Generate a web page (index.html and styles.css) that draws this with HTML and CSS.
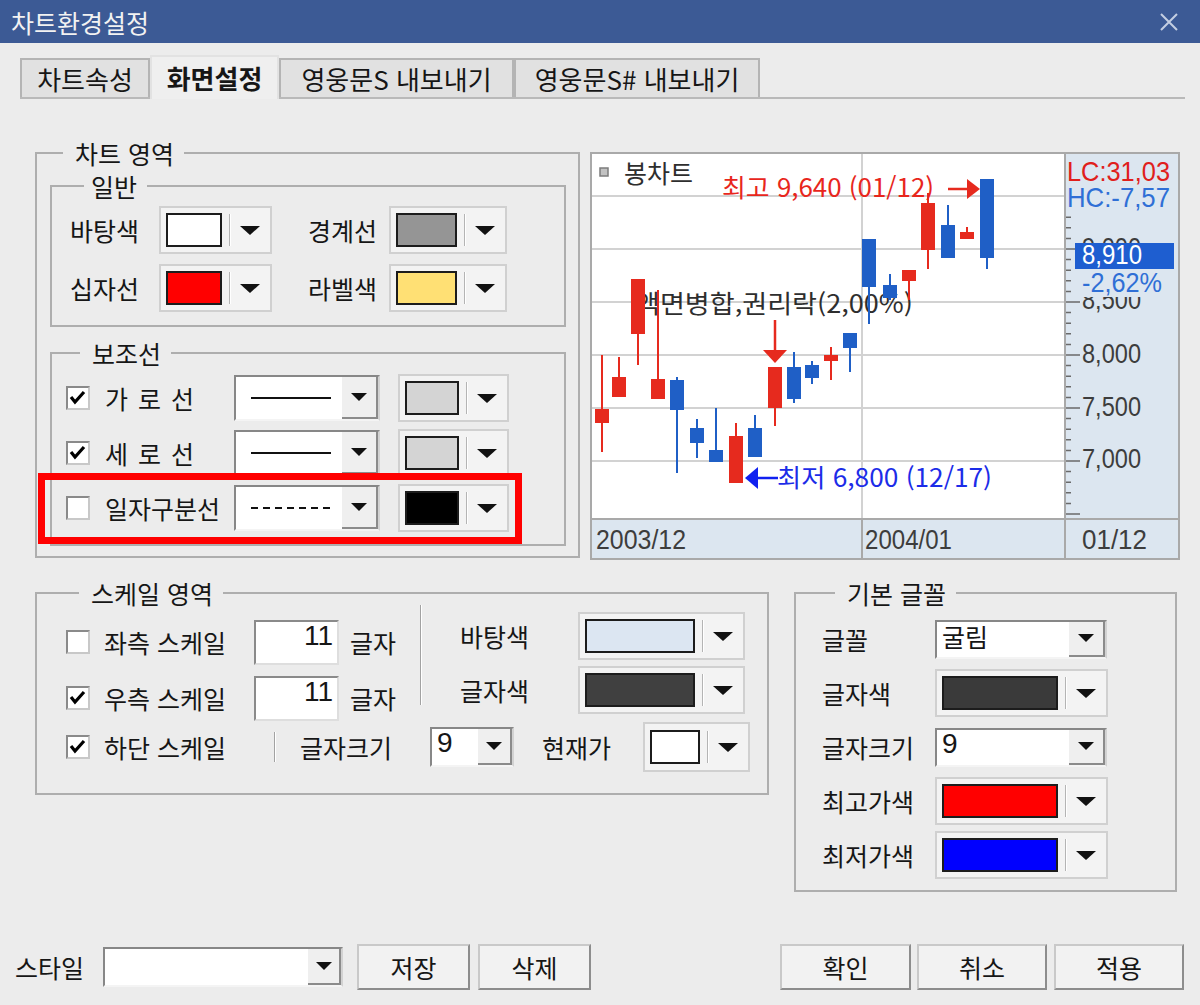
FILE: index.html
```html
<!DOCTYPE html>
<html lang="ko">

<head>
    <meta charset="UTF-8">
    <meta name="viewport" content="width=device-width, initial-scale=1.0">
    <title>차트환경설정</title>
    <link rel="stylesheet" href="styles.css">
</head>

<body>
    <div class="dialog">
        <div class="titlebar">
            <span class="title">차트환경설정</span>
            <svg class="close" width="20" height="20" viewBox="0 0 20 20">
                <path d="M2 2L18 18M18 2L2 18" stroke="#c4cee2" stroke-width="2" />
            </svg>
        </div>

        <div class="tabs">
            <div class="tab tab-1">차트속성</div>
            <div class="tab tab-2 active">화면설정</div>
            <div class="tab tab-3">영웅문S 내보내기</div>
            <div class="tab tab-4">영웅문S# 내보내기</div>
        </div>

        <div class="upper">
            <fieldset class="group chart-area">
                <legend>차트 영역</legend>

                <fieldset class="group general">
                    <legend>일반</legend>
                    <div class="general-grid">
                        <span>바탕색</span>
                        <div class="ccombo"><span class="swatch sw-white"></span><span class="sep"></span><span class="tri"></span></div>
                        <span class="lbl2">경계선</span>
                        <div class="ccombo"><span class="swatch sw-gray"></span><span class="sep"></span><span class="tri"></span></div>
                        <span>십자선</span>
                        <div class="ccombo"><span class="swatch sw-red"></span><span class="sep"></span><span class="tri"></span></div>
                        <span class="lbl2">라벨색</span>
                        <div class="ccombo"><span class="swatch sw-yellow"></span><span class="sep"></span><span class="tri"></span></div>
                    </div>
                </fieldset>

                <fieldset class="group aux">
                    <legend>보조선</legend>
                    <div class="aux-row">
                        <span class="chk"><svg width="20" height="20" viewBox="0 0 20 20"><polyline points="3,9 7,14 16,4" fill="none" stroke="#000" stroke-width="3.2" /></svg></span>
                        <span class="aux-lbl">가 로 선</span>
                        <div class="lcombo"><span class="sample"><span class="stroke"></span></span><span class="drop"><span class="tri"></span></span></div>
                        <div class="ccombo aux-color"><span class="swatch sw-light"></span><span class="sep"></span><span class="tri"></span></div>
                    </div>
                    <div class="aux-row">
                        <span class="chk"><svg width="20" height="20" viewBox="0 0 20 20"><polyline points="3,9 7,14 16,4" fill="none" stroke="#000" stroke-width="3.2" /></svg></span>
                        <span class="aux-lbl">세 로 선</span>
                        <div class="lcombo"><span class="sample"><span class="stroke"></span></span><span class="drop"><span class="tri"></span></span></div>
                        <div class="ccombo aux-color"><span class="swatch sw-light"></span><span class="sep"></span><span class="tri"></span></div>
                    </div>
                    <div class="aux-row">
                        <span class="chk"></span>
                        <span class="aux-lbl">일자구분선</span>
                        <div class="lcombo"><span class="sample"><span class="stroke dashed"></span></span><span class="drop"><span class="tri"></span></span></div>
                        <div class="ccombo aux-color"><span class="swatch sw-black"></span><span class="sep"></span><span class="tri"></span></div>
                        <!-- 강조 표시 -->
                        <div class="highlight"></div>
                    </div>
                </fieldset>
            </fieldset>

            <svg class="preview" width="590" height="408" viewBox="0 0 590 408">
                <rect width="590" height="408" fill="#a9a9a9" />
                <rect x="2" y="2" width="472" height="364" fill="#ffffff" />
                <rect x="476" y="2" width="112" height="364" fill="#dce6f0" />
                <rect x="2" y="368" width="269" height="38" fill="#dce6f0" />
                <rect x="273" y="368" width="201" height="38" fill="#dce6f0" />
                <rect x="476" y="368" width="112" height="38" fill="#dce6f0" />

                <!-- 격자 -->
                <path d="M2 44H474M2 97H474M2 150H474M2 203H474M2 256H474M2 309H474M272 2V366" stroke="#d2d2d2" stroke-width="2" />

                <!-- 눈금 -->
                <path d="M476 65.2h5M476 75.8h5M476 86.4h5M476 107.6h5M476 118.2h5M476 128.8h5M476 139.4h5M476 160.6h5M476 171.2h5M476 181.8h5M476 192.4h5M476 213.6h5M476 224.2h5M476 234.8h5M476 245.4h5M476 266.6h5M476 277.2h5M476 287.8h5M476 298.4h5M476 319.6h5M476 330.2h5M476 340.8h5M476 351.4h5"
                    stroke="#6a6a6a" stroke-width="1.5" />
                <path d="M476 97h14M476 150h14M476 203h14M476 256h14M476 309h14M476 362h14" stroke="#6a6a6a" stroke-width="1.5" />

                <text class="ax" x="492" y="105" textLength="59" lengthAdjust="spacingAndGlyphs">9,000</text>
                <text class="ax" x="492" y="157" textLength="59" lengthAdjust="spacingAndGlyphs">8,500</text>
                <text class="ax" x="492" y="211" textLength="59" lengthAdjust="spacingAndGlyphs">8,000</text>
                <text class="ax" x="492" y="264" textLength="59" lengthAdjust="spacingAndGlyphs">7,500</text>
                <text class="ax" x="492" y="316" textLength="59" lengthAdjust="spacingAndGlyphs">7,000</text>

                <text class="ax lc" x="477" y="29" textLength="103" lengthAdjust="spacingAndGlyphs">LC:31,03</text>
                <text class="ax hc" x="477" y="55" textLength="103" lengthAdjust="spacingAndGlyphs">HC:-7,57</text>

                <rect x="482" y="118" width="104" height="27" fill="#dce6f0" />
                <text class="ax hc" x="492" y="140" textLength="80" lengthAdjust="spacingAndGlyphs">-2,62%</text>
                <rect x="485" y="91" width="99" height="26" fill="#1e5ed0" />
                <text class="ax cur" x="492" y="112" textLength="60" lengthAdjust="spacingAndGlyphs">8,910</text>

                <text class="ax" x="6" y="397" textLength="90" lengthAdjust="spacingAndGlyphs">2003/12</text>
                <text class="ax" x="275" y="397" textLength="87" lengthAdjust="spacingAndGlyphs">2004/01</text>
                <text class="ax" x="492" y="397" textLength="65" lengthAdjust="spacingAndGlyphs">01/12</text>

                <!-- 범례, 주석 -->
                <rect x="10" y="16" width="8" height="8" fill="#c2c2c2" stroke="#7c7c7c" stroke-width="1.5" />
                <text class="kr note" x="34" y="31">봉차트</text>
                <text class="kr note" x="45" y="161" textLength="278" lengthAdjust="spacingAndGlyphs">액면병합,권리락(2,00%)</text>

                <!-- 봉 -->
                <g fill="#e62a1e">
                    <rect x="11" y="203" width="2" height="97" /><rect x="5" y="257" width="14" height="14" />
                    <rect x="28" y="205" width="2" height="40" /><rect x="22" y="225" width="14" height="20" />
                    <rect x="47" y="127" width="2" height="86" /><rect x="41" y="127" width="14" height="55" />
                    <rect x="67" y="138" width="2" height="109" /><rect x="61" y="227" width="14" height="20" />
                    <rect x="145" y="271" width="2" height="60" /><rect x="139" y="284" width="14" height="47" />
                    <rect x="184" y="215" width="2" height="59" /><rect x="178" y="215" width="14" height="41" />
                    <rect x="240" y="195" width="2" height="33" /><rect x="234" y="203" width="14" height="6" />
                    <rect x="318" y="118" width="2" height="30" /><rect x="312" y="118" width="14" height="11" />
                    <rect x="337" y="41" width="2" height="76" /><rect x="331" y="51" width="14" height="47" />
                    <rect x="376" y="75" width="2" height="12" /><rect x="370" y="80" width="14" height="7" />
                </g>
                <g fill="#1f5fc6">
                    <rect x="86" y="225" width="2" height="96" /><rect x="80" y="228" width="14" height="30" />
                    <rect x="106" y="267" width="2" height="39" /><rect x="100" y="276" width="14" height="15" />
                    <rect x="125" y="256" width="2" height="54" /><rect x="119" y="298" width="14" height="12" />
                    <rect x="164" y="263" width="2" height="42" /><rect x="158" y="276" width="14" height="29" />
                    <rect x="203" y="200" width="2" height="51" /><rect x="197" y="215" width="14" height="32" />
                    <rect x="221" y="209" width="2" height="23" /><rect x="215" y="213" width="14" height="13" />
                    <rect x="259" y="181" width="2" height="39" /><rect x="253" y="181" width="14" height="15" />
                    <rect x="278" y="87" width="2" height="85" /><rect x="272" y="87" width="14" height="48" />
                    <rect x="299" y="122" width="2" height="26" /><rect x="293" y="133" width="14" height="13" />
                    <rect x="357" y="53" width="2" height="53" /><rect x="351" y="73" width="14" height="33" />
                    <rect x="396" y="27" width="2" height="90" /><rect x="390" y="27" width="14" height="79" />
                </g>

                <!-- 최고, 최저 표시 -->
                <text class="kr high" x="132" y="45" textLength="212" lengthAdjust="spacingAndGlyphs">최고 9,640 (01/12)</text>
                <path d="M358 37H380" stroke="#e62a1e" stroke-width="2.5" />
                <polygon points="377,27 390,37 377,47" fill="#e62a1e" />

                <path d="M185 168V200" stroke="#e62a1e" stroke-width="2.5" />
                <polygon points="173,198 197,198 185,211" fill="#e62a1e" />

                <polygon points="155,326 168,315 168,337" fill="#1020f0" />
                <path d="M166 326H188" stroke="#1020f0" stroke-width="2.5" />
                <text class="kr low" x="187" y="335" textLength="215" lengthAdjust="spacingAndGlyphs">최저 6,800 (12/17)</text>
            </svg>
        </div>

        <div class="lower">
            <fieldset class="group scale">
                <legend>스케일 영역</legend>
                <div class="scale-top">
                    <div class="scale-left">
                        <div class="srow">
                            <span class="chk"></span>
                            <span class="s-lbl">좌측 스케일</span>
                            <span class="num">11</span>
                            <span class="unit">글자</span>
                        </div>
                        <div class="srow">
                            <span class="chk"><svg width="20" height="20" viewBox="0 0 20 20"><polyline points="3,9 7,14 16,4" fill="none" stroke="#000" stroke-width="3.2" /></svg></span>
                            <span class="s-lbl">우측 스케일</span>
                            <span class="num">11</span>
                            <span class="unit">글자</span>
                        </div>
                    </div>
                    <span class="vsep"></span>
                    <div class="scale-right">
                        <div class="srow">
                            <span class="r-lbl">바탕색</span>
                            <div class="ccombo wide"><span class="swatch sw-sky"></span><span class="sep"></span><span class="tri"></span></div>
                        </div>
                        <div class="srow">
                            <span class="r-lbl">글자색</span>
                            <div class="ccombo wide"><span class="swatch sw-dark"></span><span class="sep"></span><span class="tri"></span></div>
                        </div>
                    </div>
                </div>
                <div class="srow srow3">
                    <span class="chk"><svg width="20" height="20" viewBox="0 0 20 20"><polyline points="3,9 7,14 16,4" fill="none" stroke="#000" stroke-width="3.2" /></svg></span>
                    <span class="s-lbl long">하단 스케일</span>
                    <span class="vsep short"></span>
                    <span class="size-lbl">글자크기</span>
                    <div class="lcombo small"><span class="value digit">9</span><span class="drop"><span class="tri"></span></span></div>
                    <span class="cur-lbl">현재가</span>
                    <div class="ccombo cur"><span class="swatch sw-white"></span><span class="sep"></span><span class="tri"></span></div>
                </div>
            </fieldset>

            <fieldset class="group fontg">
                <legend>기본 글꼴</legend>
                <div class="fcol">
                    <div class="frow">
                        <span class="f-lbl">글꼴</span>
                        <div class="lcombo text"><span class="value">굴림</span><span class="drop"><span class="tri"></span></span></div>
                    </div>
                    <div class="frow">
                        <span class="f-lbl">글자색</span>
                        <div class="ccombo"><span class="swatch sw-font"></span><span class="sep"></span><span class="tri"></span></div>
                    </div>
                    <div class="frow">
                        <span class="f-lbl">글자크기</span>
                        <div class="lcombo text"><span class="value digit">9</span><span class="drop"><span class="tri"></span></span></div>
                    </div>
                    <div class="frow">
                        <span class="f-lbl">최고가색</span>
                        <div class="ccombo"><span class="swatch sw-red"></span><span class="sep"></span><span class="tri"></span></div>
                    </div>
                    <div class="frow">
                        <span class="f-lbl">최저가색</span>
                        <div class="ccombo"><span class="swatch sw-blue"></span><span class="sep"></span><span class="tri"></span></div>
                    </div>
                </div>
            </fieldset>
        </div>

        <div class="footer">
            <span class="style-lbl">스타일</span>
            <div class="lcombo style-combo"><span class="value"></span><span class="drop"><span class="tri"></span></span></div>
            <button class="btn save">저장</button>
            <button class="btn del">삭제</button>
            <button class="btn ok">확인</button>
            <button class="btn cancel">취소</button>
            <button class="btn apply">적용</button>
        </div>
    </div>
</body>

</html>
```

FILE: styles.css
```css
body {
    margin: 0;
    background-color: #ececec;
    font-family: "Noto Sans CJK KR", "Noto Sans", sans-serif;
    font-size: 25px;
    line-height: 28px;
    color: #161616;
}

.dialog {
    width: 1200px;
    height: 1005px;
    overflow: hidden;
}

/* 제목줄 */
.titlebar {
    height: 43px;
    box-sizing: border-box;
    padding: 0 21px 0 11px;
    background-color: #3c5a95;
    color: #f2f2f2;
    display: flex;
    align-items: center;
    justify-content: space-between;
}

.close {
    display: block;
}

/* 탭 */
.tabs {
    display: flex;
    align-items: flex-end;
    height: 42px;
    margin: 12px 15px 0 20px;
    border-bottom: 2px solid #b9b9b9;
}

.tab {
    height: 39px;
    box-sizing: border-box;
    border: 2px solid #b4b4b4;
    border-bottom: none;
    background-color: #e1e1e1;
    display: flex;
    align-items: center;
    justify-content: center;
    white-space: nowrap;
    font-size: 26px;
}

.tab-1 { width: 130px; }
.tab-2 { width: 129px; }
.tab-3 { width: 235px; }
.tab-4 { width: 246px; }

.tab.active {
    height: 44px;
    margin-bottom: -2px;
    background-color: #efefef;
    border-color: #e2e2e2;
    font-weight: bold;
}

/* 그룹 상자 */
fieldset.group {
    margin: 0;
    padding: 0;
    border: 2px solid #aeaeae;
    box-sizing: border-box;
    min-width: 0;
}

.group legend {
    margin-left: 13px;
    padding: 0 10px 0 12px;
    line-height: 28px;
}

.upper {
    display: flex;
    align-items: flex-start;
    margin-top: 40px;
}

.chart-area {
    width: 545px;
    height: 419px;
    margin-left: 35px !important;
    padding: 5px 12px 0 13px !important;
    flex: none;
}

.general {
    height: 155px;
    padding: 6px 0 0 18px !important;
}

.general legend {
    margin-left: 14px;
    padding-left: 7px;
}

.general-grid {
    display: grid;
    grid-template-columns: 89px 113px 117px 118px;
    grid-auto-rows: 48px;
    row-gap: 10px;
    align-items: center;
}

.lbl2 {
    padding-left: 36px;
}

.aux {
    height: 207px;
    margin-top: 12px !important;
    padding: 7px 0 0 14px !important;
}

.aux legend {
    margin-left: 14px;
}

.aux-row {
    position: relative;
    display: flex;
    align-items: center;
    height: 48px;
}

.aux-row + .aux-row {
    margin-top: 7px;
}

.aux-lbl {
    width: 129px;
    margin-left: 15px;
    white-space: nowrap;
    word-spacing: 3px;
}

.aux-color {
    width: 111px;
    margin-left: 18px;
}

.highlight {
    position: absolute;
    left: -28px;
    top: -11px;
    width: 484px;
    height: 71px;
    box-sizing: border-box;
    border: 7px solid #ff0000;
}

/* 체크박스 */
.chk {
    width: 24px;
    height: 24px;
    flex: none;
    box-sizing: border-box;
    border: 2px solid;
    border-color: #8a8a8a #c8c8c8 #c8c8c8 #8a8a8a;
    background-color: #fff;
    display: flex;
}

.chk svg {
    display: block;
}

/* 색상 선택 */
.ccombo {
    height: 48px;
    flex: none;
    box-sizing: border-box;
    border: 2px solid #d0d0d0;
    background-color: #f3f3f3;
    display: flex;
    align-items: center;
    padding: 0 10px 0 5px;
}

.swatch {
    flex: 1;
    height: 34px;
    box-sizing: border-box;
    border: 2px solid #1c1c1c;
}

.sep {
    width: 1px;
    height: 32px;
    margin-left: 7px;
    background-color: #b4b4b4;
    border-right: 1px solid #fff;
}

.tri {
    width: 0;
    height: 0;
    border-left: 8px solid transparent;
    border-right: 8px solid transparent;
    border-top: 8px solid #111;
}

.ccombo .tri {
    margin-left: 9px;
    border-left-width: 10px;
    border-right-width: 10px;
    border-top-width: 9px;
}

.sw-white { background-color: #ffffff; }
.sw-gray { background-color: #959595; }
.sw-red { background-color: #ff0000; }
.sw-yellow { background-color: #ffe074; }
.sw-light { background-color: #d4d4d4; }
.sw-black { background-color: #000000; }
.sw-sky { background-color: #dce6f2; }
.sw-dark { background-color: #404040; }
.sw-font { background-color: #3a3a3a; }
.sw-blue { background-color: #0000ff; }

/* 콤보 (들어간 모양) */
.lcombo {
    width: 146px;
    height: 46px;
    flex: none;
    box-sizing: border-box;
    display: flex;
    border: 2px solid;
    border-color: #878787 #d2d2d2 #f4f4f4 #878787;
    background-color: #fff;
}

.sample {
    flex: 1;
    display: flex;
    align-items: center;
    padding-left: 15px;
}

.stroke {
    width: 80px;
    height: 2px;
    background-color: #111;
}

.stroke.dashed {
    background: repeating-linear-gradient(90deg, #111 0 7px, transparent 7px 12px);
}

.drop {
    width: 36px;
    flex: none;
    box-sizing: border-box;
    background-color: #efefef;
    border-right: 2px solid #8b8b8b;
    border-bottom: 2px solid #8b8b8b;
    display: flex;
    align-items: center;
    justify-content: center;
}

.value {
    flex: 1;
    padding-left: 5px;
    white-space: nowrap;
}

.digit {
    font-family: "Liberation Sans", sans-serif;
    font-size: 28px;
    line-height: 28px;
}

/* 미리보기 */
.preview {
    display: block;
    flex: none;
    margin: 13px 0 0 10px;
}

.ax {
    font-family: "Liberation Sans", sans-serif;
    font-size: 28px;
    fill: #3d3d3d;
}

.ax.lc { fill: #e0201c; }
.ax.hc { fill: #2f6fd6; }
.ax.cur { fill: #ffffff; }

.kr {
    font-family: "Noto Sans CJK KR", sans-serif;
    font-size: 25px;
}

.note { fill: #2e2e2e; }
.high { fill: #e8261c; }
.low { fill: #1c2ce8; }

/* 스케일 영역 */
.lower {
    display: flex;
    align-items: flex-start;
    margin-top: 19px;
}

.scale {
    width: 734px;
    height: 216px;
    flex: none;
    margin-left: 35px !important;
    padding-left: 29px !important;
}

.scale-top {
    display: flex;
    align-items: flex-start;
}

.scale-left {
    display: flex;
    flex-direction: column;
    gap: 8px;
    padding-top: 11px;
}

.srow {
    display: flex;
    align-items: center;
    height: 48px;
}

.s-lbl {
    width: 150px;
    margin-left: 14px;
    white-space: nowrap;
}

.s-lbl.long {
    width: 170px;
}

.num {
    width: 85px;
    height: 45px;
    box-sizing: border-box;
    border: 2px solid;
    border-color: #8a8a8a #dedede #dedede #8a8a8a;
    background-color: #fff;
    text-align: right;
    padding-right: 4px;
    font-family: "Liberation Sans", sans-serif;
    font-size: 28px;
    line-height: 28px;
}

.unit {
    margin-left: 11px;
}

.vsep {
    width: 1px;
    height: 100px;
    flex: none;
    margin: -2px 0 0 24px;
    background-color: #a2a2a2;
    border-right: 1px solid #fff;
}

.vsep.short {
    height: 30px;
    margin: 0;
}

.scale-right {
    display: flex;
    flex-direction: column;
    gap: 6px;
    padding-top: 5px;
    margin-left: 38px;
}

.r-lbl {
    width: 118px;
}

.ccombo.wide {
    width: 167px;
}

.srow3 {
    height: 50px;
}

.size-lbl {
    width: 130px;
    margin-left: 24px;
}

.lcombo.small {
    width: 84px;
    height: 40px;
}

.lcombo.small .drop {
    width: 34px;
}

.cur-lbl {
    width: 101px;
    margin-left: 28px;
}

.ccombo.cur {
    width: 107px;
    height: 50px;
}

/* 기본 글꼴 */
.fontg {
    width: 383px;
    height: 313px;
    flex: none;
    margin-left: 25px !important;
    padding: 8px 0 0 26px !important;
}

.fcol {
    display: flex;
    flex-direction: column;
    gap: 6px;
}

.frow {
    display: flex;
    align-items: center;
    height: 48px;
}

.f-lbl {
    width: 113px;
    white-space: nowrap;
}

.fontg .ccombo {
    width: 173px;
}

.lcombo.text {
    width: 172px;
    height: 39px;
}

/* 하단 버튼 */
.footer {
    display: flex;
    align-items: center;
    height: 46px;
    margin-top: 52px;
    padding: 0 16px 0 15px;
}

.style-lbl {
    width: 75px;
    flex: none;
}

.style-combo {
    width: 240px;
    height: 40px;
    margin-left: 13px;
}

.style-combo .drop {
    width: 33px;
}

.btn {
    width: 113px;
    height: 46px;
    box-sizing: border-box;
    border: 2px solid;
    border-color: #c9c9c9 #8d8d8d #8d8d8d #c9c9c9;
    background-color: #f2f2f2;
    font-family: "Noto Sans CJK KR", sans-serif;
    font-size: 25px;
    line-height: 28px;
    color: #161616;
    padding: 0;
}

.btn.save { margin-left: 14px; }
.btn.del { margin-left: 8px; }
.btn.ok { margin-left: auto; width: 131px; }
.btn.cancel { margin-left: 6px; width: 130px; }
.btn.apply { margin-left: 7px; width: 130px; }
```
